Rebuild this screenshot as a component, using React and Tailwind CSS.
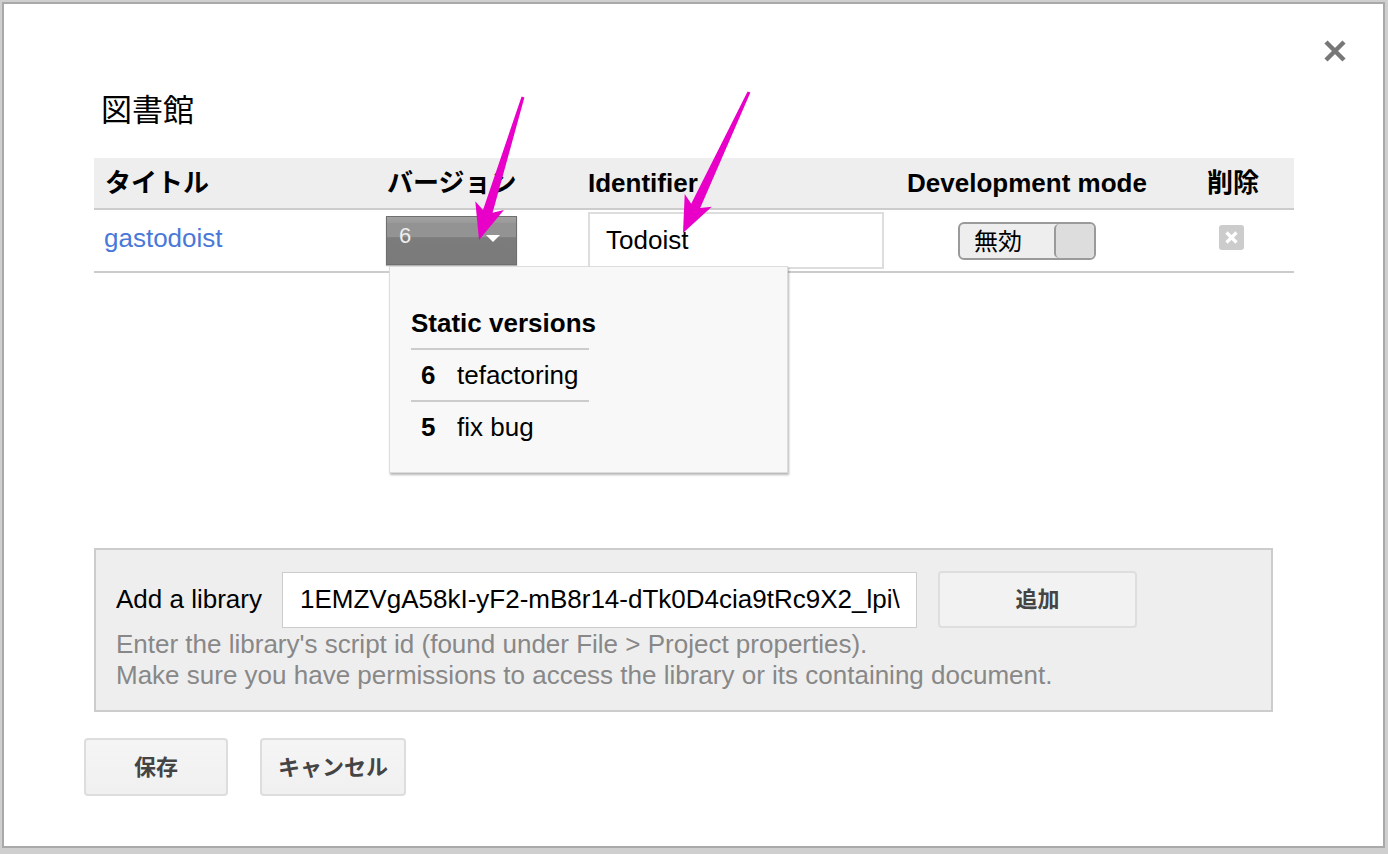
import React from 'react';

const FONT = '"Liberation Sans", "Noto Sans CJK JP", Arial, sans-serif';

// pink annotation arrow, tapered shaft + notched head
function arrowPoints(tx, ty, px, py) {
  const dx = px - tx;
  const dy = py - ty;
  const len = Math.hypot(dx, dy);
  const ux = dx / len;
  const uy = dy / len;
  const nx = -uy;
  const ny = ux;
  const at = (d, w) => [px - ux * d + nx * w, py - uy * d + ny * w];
  const pts = [
    at(len, 1.5),
    at(30, 5),
    at(36, 15),
    [px, py],
    at(36, -15),
    at(30, -5),
    at(len, -1.5),
  ];
  return pts.map((p) => p.map((v) => v.toFixed(1)).join(',')).join(' ');
}

function VersionMenu() {
  return (
    <div className="absolute left-[389px] top-[266px] w-[399px] h-[207px] bg-[#f8f8f8] border border-[#dcdcdc] shadow-[1px_2px_2px_rgba(0,0,0,0.28)] pl-[21px] pt-[41px]">
      <div className="text-[26px] leading-[30px] font-bold text-black">Static versions</div>
      <div className="w-[178px] mt-[10px]">
        <div className="h-[2px] bg-[#cccccc]" />
        <div className="flex items-center h-[50px] text-[26px]">
          <span className="w-[46px] pl-[10px] font-bold">6</span>
          <span>tefactoring</span>
        </div>
        <div className="h-[2px] bg-[#cccccc]" />
        <div className="flex items-center h-[50px] text-[26px]">
          <span className="w-[46px] pl-[10px] font-bold">5</span>
          <span>fix bug</span>
        </div>
      </div>
    </div>
  );
}

export default function App() {
  return (
    <div
      className="relative w-[1388px] h-[854px] bg-[#cfcfcf] overflow-hidden text-black"
      style={{ fontFamily: FONT }}
    >
      {/* dialog */}
      <div className="ml-[2px] mt-[2px] w-[1383px] h-[846px] border-2 border-[#a9a9a9] bg-white pl-[80px] pr-[36px]">
        {/* close */}
        <div className="flex justify-end h-[90px] pt-[35px]">
          <svg width="24" height="24" viewBox="0 0 24 24">
            <path d="M3 3 L21 21 M21 3 L3 21" stroke="#777" strokeWidth="4.5" strokeLinecap="butt" />
          </svg>
        </div>

        <h1 className="ml-[17px] text-[31px] leading-[34px] font-normal">図書館</h1>

        {/* libraries table */}
        <div className="ml-[10px] mt-[30px] w-[1200px]">
          <div className="flex items-center h-[52px] bg-[#eeeeee] border-b-2 border-[#cccccc] text-[26px] font-bold">
            <div className="w-[282px] pl-[11px]">タイトル</div>
            <div className="w-[201px] pl-[11px]">バージョン</div>
            <div className="w-[305px] pl-[11px]">Identifier</div>
            <div className="w-[290px] text-center">Development mode</div>
            <div className="w-[122px] text-center">削除</div>
          </div>
          <div className="flex items-center h-[63px] border-b-2 border-[#cccccc] text-[26px]">
            <div className="w-[282px] pl-[10px] text-[#4a78d8] -mt-[4px]">gastodoist</div>
            <div className="w-[201px] pl-[10px]">
              <div className="relative w-[131px] h-[49px] border border-[#6f6f6f] bg-[linear-gradient(#a2a2a2_0%,#9a9a9a_12%,#939393_13%,#939393_42%,#7c7c7c_44%,#7a7a7a_100%)] text-[#eeeeee] text-[22px] leading-[38px] pl-[12px] shadow-[0_1px_1px_rgba(0,0,0,0.3)]">
                6
                <div className="absolute right-[16px] top-[18px] w-0 h-0 border-l-[7px] border-r-[7px] border-t-[7px] border-l-transparent border-r-transparent border-t-white" />
              </div>
            </div>
            <div className="w-[305px] pl-[11px]">
              <div className="w-[296px] h-[57px] border-2 border-[#dddddd] flex items-center pl-[16px]">Todoist</div>
            </div>
            <div className="w-[290px] flex justify-center">
              <div className="flex w-[138px] h-[38px] border-2 border-[#9a9a9a] rounded-[6px] bg-[#eeeeee] overflow-hidden">
                <div className="flex-1 pl-[14px] text-[24px] leading-[36px]">無効</div>
                <div className="w-[40px] h-full bg-[#dddddd] border-l-2 border-[#9a9a9a] rounded-[5px]" />
              </div>
            </div>
            <div className="w-[122px] flex justify-center -mt-[6px] pr-[4px]">
              <div className="w-[25px] h-[25px] rounded-[3px] bg-[#cccccc] flex items-center justify-center">
                <svg width="15" height="15" viewBox="0 0 15 15">
                  <path d="M2.5 2.5 L12.5 12.5 M12.5 2.5 L2.5 12.5" stroke="#fff" strokeWidth="3.2" />
                </svg>
              </div>
            </div>
          </div>
        </div>

        {/* add a library */}
        <div className="ml-[10px] mt-[275px] w-[1179px] h-[164px] bg-[#eeeeee] border-2 border-[#cccccc] pl-[20px] pt-[21px]">
          <div className="flex items-center text-[26px]">
            <span className="w-[166px]">Add a library</span>
            <div className="w-[635px] h-[56px] bg-white border border-[#cccccc] flex items-center pl-[17px] overflow-hidden whitespace-nowrap">
              1EMZVgA58kI-yF2-mB8r14-dTk0D4cia9tRc9X2_lpi\
            </div>
            <button className="ml-[21px] w-[199px] h-[57px] bg-[#f2f2f2] border-2 border-[#dedede] rounded-[4px] text-[22px] font-bold text-[#444444]">
              追加
            </button>
          </div>
          <div className="mt-[1px] text-[26px] leading-[31px] text-[#888888]">
            <div>Enter the library's script id (found under File &gt; Project properties).</div>
            <div>Make sure you have permissions to access the library or its containing document.</div>
          </div>
        </div>

        {/* footer buttons */}
        <div className="flex gap-[32px] mt-[26px]">
          <button className="w-[144px] h-[58px] bg-[linear-gradient(#f5f5f5,#f0f0f0)] border-2 border-[#dddddd] rounded-[4px] text-[22px] font-bold text-[#444444]">
            保存
          </button>
          <button className="w-[146px] h-[58px] bg-[linear-gradient(#f5f5f5,#f0f0f0)] border-2 border-[#dddddd] rounded-[4px] text-[22px] font-bold text-[#444444]">
            キャンセル
          </button>
        </div>
      </div>

      <VersionMenu />

      {/* annotation arrows */}
      <svg className="absolute inset-0 pointer-events-none" width="1388" height="854">
        <polygon points={arrowPoints(523, 97, 479, 240)} fill="#e800c8" />
        <polygon points={arrowPoints(749, 92, 683, 233)} fill="#e800c8" />
      </svg>
    </div>
  );
}
